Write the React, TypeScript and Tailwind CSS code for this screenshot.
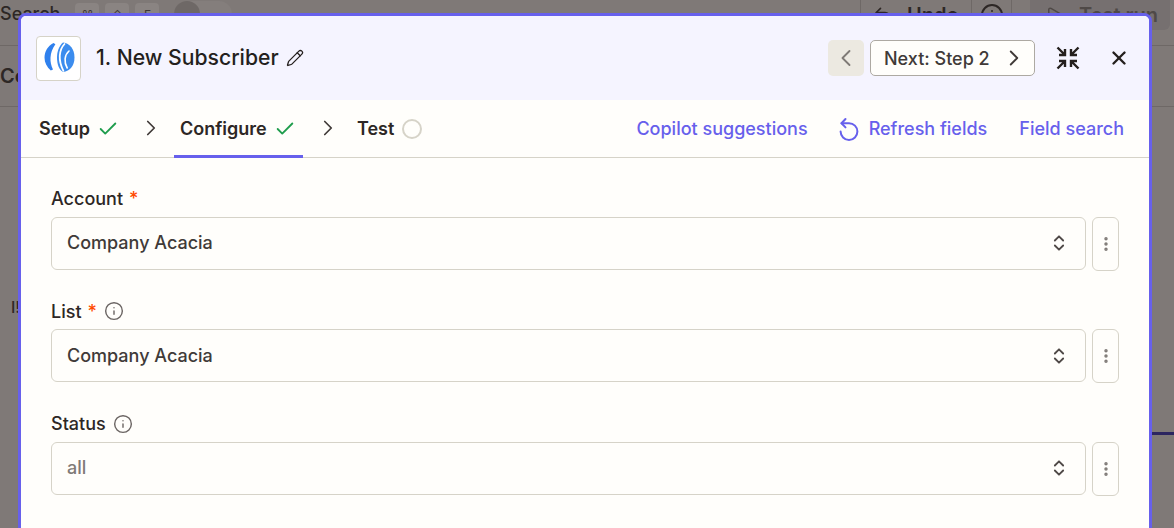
import { Check, ChevronLeft, ChevronRight, ChevronsUpDown, EllipsisVertical, Info, Pencil, Play, X, Undo2 } from "lucide-react";

function Key({ label }: { label: string }) {
    return <span className="flex h-6 w-6 items-center justify-center rounded-[4px] bg-[#8a8482] text-[12px] text-[#3d3735]">{label}</span>;
}

function Backdrop() {
    return (
        <div className="flex h-full flex-col bg-[#7f7977] text-[#2d2725]">
            <div className="flex h-[46px] items-start justify-between overflow-hidden border-b border-[#6e6866]">
                <div className="flex items-center">
                    <span className="text-[18px] font-medium">Search</span>
                    <div className="ml-[15px] flex gap-[6px] pt-[2px]">
                        <Key label="⌘" />
                        <Key label="⇧" />
                        <Key label="F" />
                    </div>
                    <div className="ml-[15px] flex h-[26px] w-[58px] rounded-full bg-[#847e7c]">
                        <span className="h-[26px] w-[26px] rounded-full bg-[#6e6866]" />
                    </div>
                </div>
                <div className="flex h-[30px] items-center pr-[4px]">
                    <div className="flex h-full w-[112px] items-center gap-[14px] border-x border-[#6e6866] pl-[12px] text-[20px] font-semibold">
                        <Undo2 size={20} />
                        Undo
                    </div>
                    <div className="flex h-full w-[40px] items-center justify-center border-r border-[#6e6866]"><Info size={24} /></div>
                    <div className="ml-[18px] flex h-full w-[140px] items-center gap-[16px] rounded-b-[6px] bg-[#767070] pl-[15px] text-[20px] font-semibold text-[#4f4947]">
                        <Play size={18} />
                        Test run
                    </div>
                </div>
            </div>
            <div className="flex h-[61px] items-center border-b border-[#6e6866] text-[20px] font-semibold">Co</div>
            <div className="mt-[188px] pl-[11px] text-[16px] font-medium">I!</div>
            <div className="ml-auto mt-[113px] h-[3px] w-[22px] bg-[#2c2560]" />
        </div>
    );
}

function Logo() {
    return (
        <div className="flex h-[45px] w-[45px] items-center justify-center rounded-[4px] border border-[#d6d3c8] bg-white">
            <svg width="32" height="32" viewBox="0 0 32 32">
                <path d="M10.5 1C4.5 4 1.5 10 1.5 15.5C1.5 20.5 3.8 25 7.8 28.4L10 27.4C6.4 20.5 6.2 10.5 12.4 2.2Z" fill="#2f80ed" />
                <path d="M20 0.6C27 1.4 31.5 7.5 31.5 15.5C31.5 23.5 27 29.2 20 30C16 27.5 14 22.5 14 15.5C14 9.5 16 4 20 0.6Z" fill="#3b8cee" />
                <path d="M21.5 2C15.8 8 15 18.5 20.4 28.8" fill="none" stroke="#ffffff" strokeWidth="1.8" strokeLinecap="round" />
                <path d="M26 9C21.4 13 20.8 20 24.2 26" fill="none" stroke="#ffffff" strokeWidth="1.6" strokeLinecap="round" />
            </svg>
        </div>
    );
}

function CollapseIcon() {
    return (
        <svg width="24" height="24" viewBox="0 0 24 24" fill="none" stroke="#241f1d" strokeWidth="2.4" className="ml-[21px]">
            <path d="M1.5 1.5L8.5 8.5M3 9H9V3" />
            <path d="M22.5 1.5L15.5 8.5M21 9H15V3" />
            <path d="M1.5 22.5L8.5 15.5M3 15H9V21" />
            <path d="M22.5 22.5L15.5 15.5M21 15H15V21" />
        </svg>
    );
}

function RefreshIcon() {
    return (
        <svg width="20" height="28" viewBox="0 0 20 28" fill="none" stroke="#6760ec" strokeWidth="2" strokeLinecap="round" strokeLinejoin="round" className="ml-[31px]">
            <path d="M2.5 8.2H10A8.4 8.4 0 1 1 1.6 16.6" />
            <path d="M6.5 4L2.5 8.2L6.5 12.4" />
        </svg>
    );
}

function Field({ label, required, info, value, muted }: { label: string; required?: boolean; info?: boolean; value: string; muted?: boolean }) {
    return (
        <div className="flex flex-col">
            <div className="flex h-[24px] items-center pt-[2px] text-[18px] font-medium text-[#2d2725]">
                {label}
                {required && <span className="ml-[6px] text-[#ff4a00]">*</span>}
                {info && <Info size={20} strokeWidth={1.7} className="ml-[7px] text-[#6b6563]" />}
            </div>
            <div className="mt-[7px] flex gap-[6px]">
                <div className="flex h-[53px] flex-1 items-center justify-between rounded-[6px] border border-[#d6d3c8] pl-[15px] pr-[16px]">
                    <span className={muted ? "pb-[1.5px] text-[18px] font-[450] text-[#7f7a76]" : "pb-[1.5px] text-[18px] font-[450] text-[#403a38]"}>{value}</span>
                    <ChevronsUpDown size={20} strokeWidth={2.2} className="text-[#4f4947]" />
                </div>
                <div className="flex h-[54px] w-[27px] items-center justify-center rounded-[6px] border border-[#d6d3c8]">
                    <EllipsisVertical size={18} strokeWidth={2.6} className="text-[#7f7a76]" />
                </div>
            </div>
        </div>
    );
}

export default function App() {
    return (
        <div className="relative h-[528px] w-[1174px] overflow-hidden font-['Inter',sans-serif]">
            <Backdrop />
            <div className="absolute left-[18px] top-[13px] flex h-[540px] w-[1134px] flex-col rounded-t-[8px] border-[3px] border-[#6760ec] bg-[#fffefb]">
                <div className="flex h-[84px] items-center rounded-t-[5px] bg-[#f5f4ff] pl-[15px] pr-[19px]">
                    <Logo />
                    <span className="ml-[15px] text-[21.2px] font-medium text-[#241f1d]">1. New Subscriber</span>
                    <Pencil size={18} strokeWidth={1.7} className="ml-[7px] text-[#241f1d]" />
                    <div className="ml-auto flex h-9 w-9 items-center justify-center rounded-[5px] bg-[#ece9e1]">
                        <ChevronLeft size={28} strokeWidth={1.6} className="text-[#7f7a76]" />
                    </div>
                    <div className="ml-[6px] flex h-9 w-[165px] items-center justify-between rounded-[5px] border border-[#ada9a2] bg-[#fffefb] pl-[13px] pr-[7px] text-[18px] font-[450] text-[#403a38]">
                        Next: Step 2
                        <ChevronRight size={26} strokeWidth={1.7} />
                    </div>
                    <CollapseIcon />
                    <X size={22} strokeWidth={2.6} className="ml-[28px] text-[#241f1d]" />
                </div>
                <div className="flex h-[58px] items-center border-b border-[#d6d3c8] pl-[18px] pr-[25px] text-[18px] font-semibold text-[#2d2725]">
                    <span>Setup</span>
                    <Check size={22} strokeWidth={2} className="ml-[7px] text-[#1f9d4d]" />
                    <ChevronRight size={26} strokeWidth={1.6} className="ml-[19px] -mt-[2px] text-[#403a38]" />
                    <div className="relative ml-[10px] flex h-full w-[129px] items-center pl-[6px]">
                        <span>Configure</span>
                        <Check size={22} strokeWidth={2} className="ml-[7px] text-[#1f9d4d]" />
                        <div className="absolute bottom-[-1px] left-0 right-0 h-[3px] bg-[#6760ec]" />
                    </div>
                    <ChevronRight size={26} strokeWidth={1.6} className="ml-[12px] -mt-[2px] text-[#403a38]" />
                    <span className="ml-[16px]">Test</span>
                    <span className="ml-[8px] h-5 w-5 rounded-full border-2 border-[#d6d3c8]" />
                    <div className="ml-auto flex items-center font-medium text-[#6760ec]">
                        <span>Copilot suggestions</span>
                        <RefreshIcon />
                        <span className="ml-[10px]">Refresh fields</span>
                        <span className="ml-[32px]">Field search</span>
                    </div>
                </div>
                <div className="flex flex-col gap-[27.5px] px-[30px] pt-[27.75px]">
                    <Field label="Account" required value="Company Acacia" />
                    <Field label="List" required info value="Company Acacia" />
                    <Field label="Status" info value="all" muted />
                </div>
            </div>
        </div>
    );
}
